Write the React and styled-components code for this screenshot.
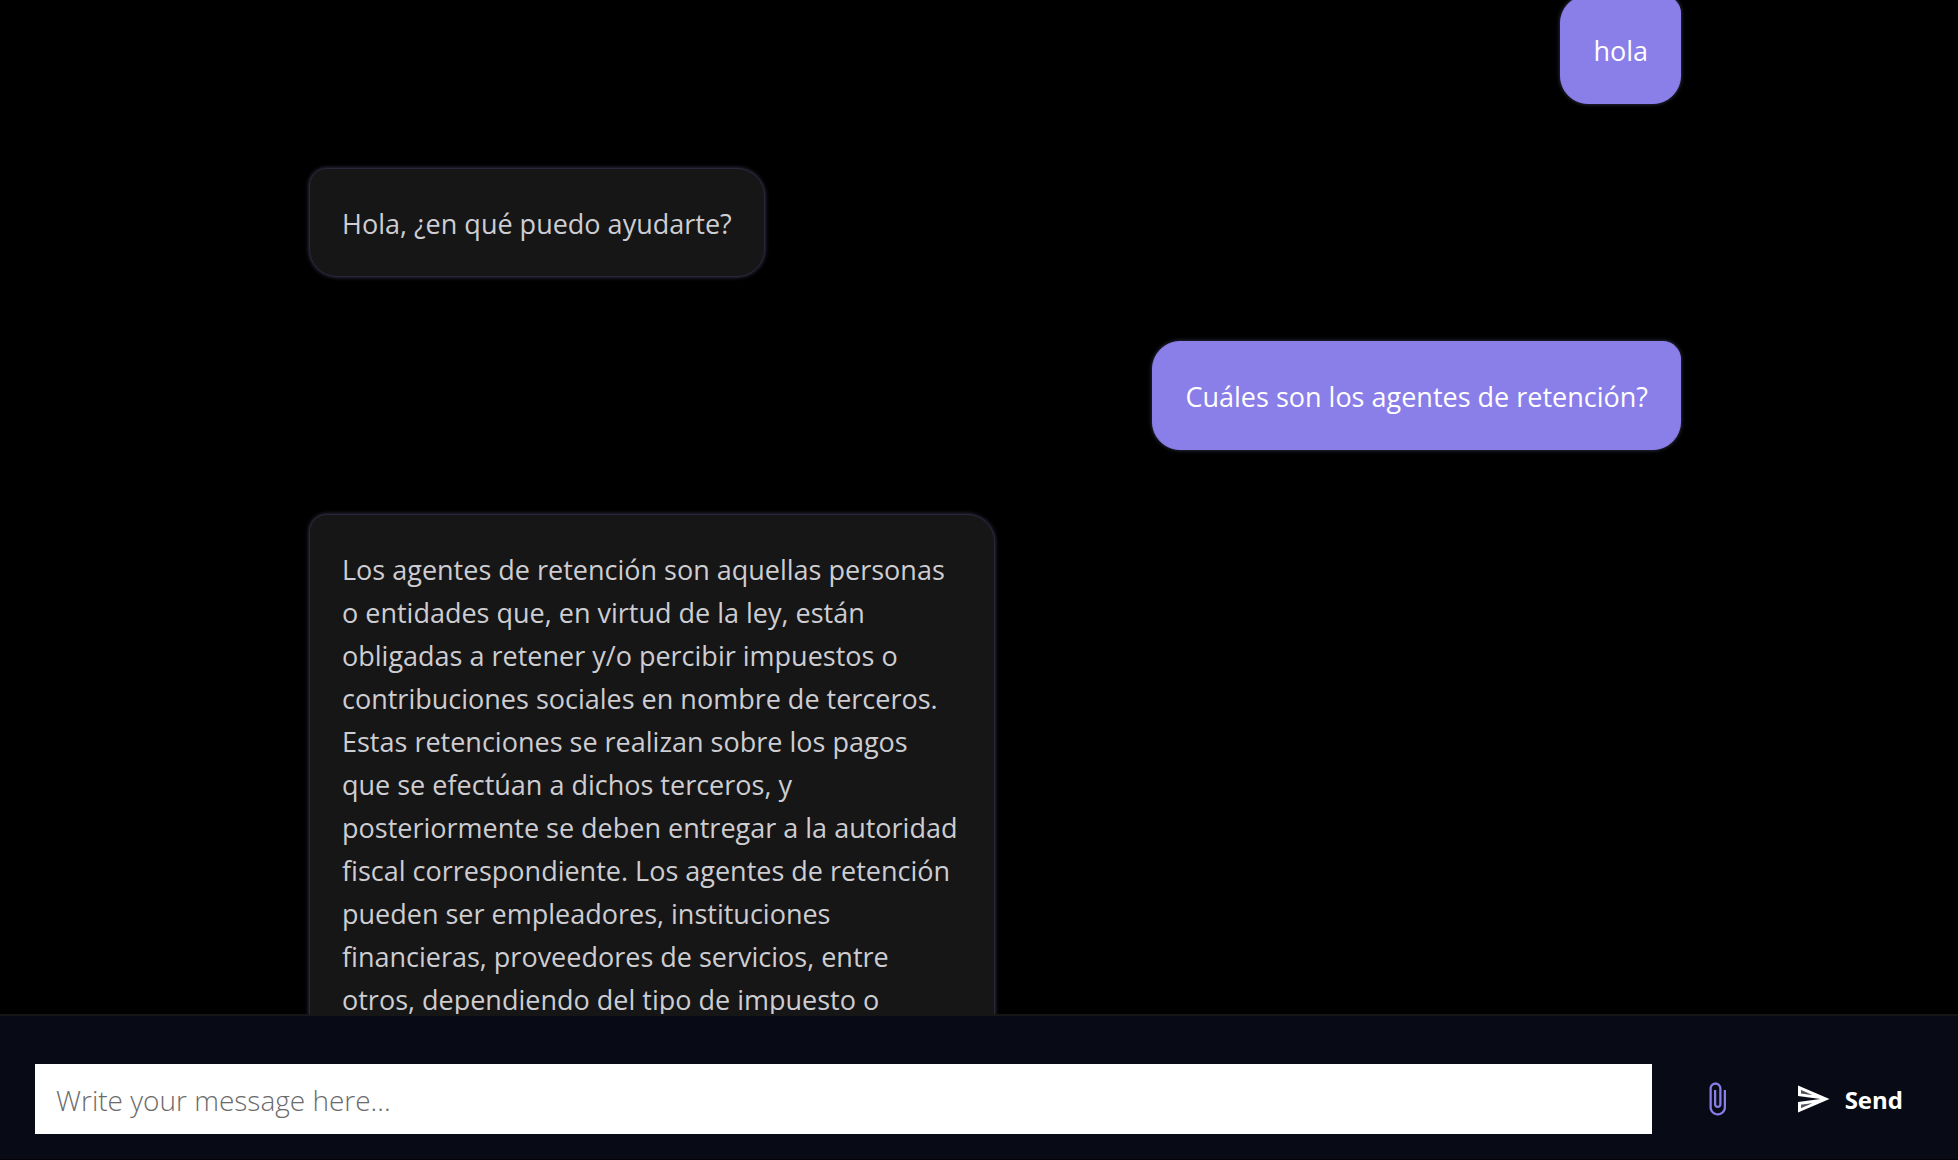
import React, { useLayoutEffect, useRef } from "react";
import styled, { createGlobalStyle } from "styled-components";

const GlobalStyle = createGlobalStyle`
  *, *::before, *::after { box-sizing: border-box; }
  body {
    margin: 0;
    background: #000;
    font-family: "Segoe UI", "Open Sans", "Noto Sans", sans-serif;
    font-size: 27px;
    line-height: 43px;
  }
`;

const Page = styled.div`
  display: flex;
  flex-direction: column;
  height: 100vh;
  background: #000;
`;

const Log = styled.main`
  flex: 1;
  min-height: 0;
  overflow-y: auto;
  scrollbar-width: none;
`;

const Thread = styled.ol`
  display: flex;
  flex-direction: column;
  gap: 64px;
  max-width: 1404px;
  margin: 0 auto;
  padding: 32px 0 64px 32px;
  list-style: none;
`;

const Bubble = styled.li`
  align-self: ${(p) => (p.$own ? "flex-end" : "flex-start")};
  max-width: 50%;
  padding: 33px 32px 31px;
  border: 1px solid ${(p) => (p.$own ? "#8a7ee9" : "#28283a")};
  border-radius: ${(p) => (p.$own ? "28px 18px 28px 28px" : "18px 28px 28px 28px")};
  background: ${(p) => (p.$own ? "#8a7ee9" : "#161616")};
  color: ${(p) => (p.$own ? "#fff" : "#cdcdd2")};
  box-shadow: 0 0 4px rgba(120, 120, 180, 0.5);
`;

const Composer = styled.form`
  display: flex;
  align-items: center;
  padding: 48px 33px 25px 35px;
  border-top: 2px solid #161616;
  border-bottom: 1px solid #05020a;
  background: #080a16;
`;

const MessageInput = styled.input`
  flex: 1;
  min-width: 0;
  height: 70px;
  padding: 1px 21px 0;
  border: 0;
  border-radius: 0;
  background: #fff;
  color: #161616;
  font: inherit;
  font-size: 28px;
  font-weight: 300;

  &::placeholder {
    color: #6b6b6b;
    opacity: 1;
  }
`;

const ActionButton = styled.button`
  display: flex;
  align-items: center;
  gap: 14px;
  padding: 12px 22px;
  border: 0;
  background: none;
  color: ${(p) => p.$color};
  font: inherit;
  font-size: 24px;
  font-weight: 700;
  cursor: pointer;
`;

const AttachButton = styled(ActionButton)`
  margin: 0 16px 0 25px;
`;

const Icon = styled.svg`
  display: block;
  width: 36px;
  height: 36px;
  fill: currentColor;
`;

const messages = [
  { own: true, text: "hola" },
  { own: false, text: "Hola, ¿en qué puedo ayudarte?" },
  { own: true, text: "Cuáles son los agentes de retención?" },
  {
    own: false,
    text: "Los agentes de retención son aquellas personas o entidades que, en virtud de la ley, están obligadas a retener y/o percibir impuestos o contribuciones sociales en nombre de terceros. Estas retenciones se realizan sobre los pagos que se efectúan a dichos terceros, y posteriormente se deben entregar a la autoridad fiscal correspondiente. Los agentes de retención pueden ser empleadores, instituciones financieras, proveedores de servicios, entre otros, dependiendo del tipo de impuesto o",
  },
];

const INITIAL_SCROLL = 37;

export default function App() {
  const log = useRef(null);

  useLayoutEffect(() => {
    log.current.scrollTop = INITIAL_SCROLL;
  }, []);

  return (
    <>
      <GlobalStyle />
      <Page>
        <Log ref={log}>
          <Thread>
            {messages.map((m, i) => (
              <Bubble key={i} $own={m.own}>
                {m.text}
              </Bubble>
            ))}
          </Thread>
        </Log>
        <Composer onSubmit={(e) => e.preventDefault()}>
          <MessageInput type="text" aria-label="Message" placeholder="Write your message here..." />
          <AttachButton type="button" aria-label="Attach file" $color="#8a7ee9">
            <Icon viewBox="0 0 24 24" aria-hidden="true">
              <path d="M16.5 6v11.5c0 2.21-1.79 4-4 4s-4-1.79-4-4V5c0-1.38 1.12-2.5 2.5-2.5s2.5 1.12 2.5 2.5v10.5c0 .55-.45 1-1 1s-1-.45-1-1V6H10v9.5c0 1.38 1.12 2.5 2.5 2.5s2.5-1.12 2.5-2.5V5c0-2.21-1.79-4-4-4S7 2.79 7 5v12.5c0 3.04 2.46 5.5 5.5 5.5s5.5-2.46 5.5-5.5V6h-1.5z" />
            </Icon>
          </AttachButton>
          <ActionButton type="submit" $color="#fff">
            <Icon viewBox="0 0 24 24" aria-hidden="true">
              <path opacity="0.3" d="M4 8.25l7.51 1-7.5-3.22zm.01 9.72l7.5-3.22-7.51 1z" />
              <path d="M2.01 3L2 10l15 2-15 2 .01 7L23 12 2.01 3zM4 8.25V6.03l7.51 3.22-7.51-1zm.01 9.72v-2.22l7.51-1-7.51 3.22z" />
            </Icon>
            Send
          </ActionButton>
        </Composer>
      </Page>
    </>
  );
}
